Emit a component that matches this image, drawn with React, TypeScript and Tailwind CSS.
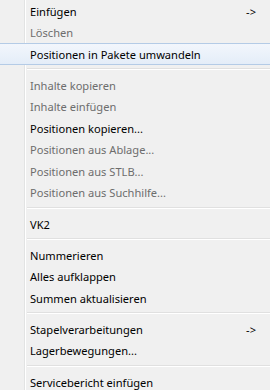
type Entry =
  | { kind: 'item'; label: string; disabled?: boolean; arrow?: boolean; active?: boolean }
  | { kind: 'sep' };

const entries: Entry[] = [
  { kind: 'item', label: 'Einfügen', arrow: true },
  { kind: 'item', label: 'Löschen', disabled: true },
  { kind: 'item', label: 'Positionen in Pakete umwandeln', active: true },
  { kind: 'sep' },
  { kind: 'item', label: 'Inhalte kopieren', disabled: true },
  { kind: 'item', label: 'Inhalte einfügen', disabled: true },
  { kind: 'item', label: 'Positionen kopieren...' },
  { kind: 'item', label: 'Positionen aus Ablage...', disabled: true },
  { kind: 'item', label: 'Positionen aus STLB...', disabled: true },
  { kind: 'item', label: 'Positionen aus Suchhilfe...', disabled: true },
  { kind: 'sep' },
  { kind: 'item', label: 'VK2' },
  { kind: 'sep' },
  { kind: 'item', label: 'Nummerieren' },
  { kind: 'item', label: 'Alles aufklappen' },
  { kind: 'item', label: 'Summen aktualisieren' },
  { kind: 'sep' },
  { kind: 'item', label: 'Stapelverarbeitungen', arrow: true },
  { kind: 'item', label: 'Lagerbewegungen...' },
  { kind: 'sep' },
  { kind: 'item', label: 'Servicebericht einfügen' },
];

function MenuRow({ entry }: { entry: Entry }) {
  if (entry.kind === 'sep') {
    return (
      <div className="flex h-[9.7px]">
        <div className="w-[24px] shrink-0" />
        <div className="flex-1 border-l border-[#e2e3e3] shadow-[inset_1px_0_0_#ffffff] flex items-center pl-[2px]">
          <div className="w-full border-t border-[#e0e0e0] border-b border-b-white" />
        </div>
      </div>
    );
  }

  const text = entry.disabled ? 'text-[#6d6d6d]' : 'text-[#000000]';

  if (entry.active) {
    return (
      <div className="h-[21.5px] mx-[-3px] flex items-center rounded-[3px] border border-[#b4cbe6] bg-gradient-to-b from-[#f2f6fc] to-[#e4edf8]">
        <span className={`pl-[32px] pt-[1px] ${text}`}>{entry.label}</span>
      </div>
    );
  }

  return (
    <div className="flex h-[21.5px]">
      <div className="w-[24px] shrink-0" />
      <div className="flex-1 border-l border-[#e2e3e3] shadow-[inset_1px_0_0_#ffffff] flex items-center justify-between pl-[5px] pr-[14px] pt-[1px]">
        <span className={text}>{entry.label}</span>
        {entry.arrow && <span className="text-[#000000]">-&gt;</span>}
      </div>
    </div>
  );
}

export default function App() {
  return (
    <div
      className="w-[270px] h-[390px] overflow-hidden bg-[#f0f0f0] text-[11.1px] leading-none"
      style={{ fontFamily: '"Segoe UI", "Noto Sans", "Open Sans", sans-serif' }}
    >
      {entries.map((entry, i) => (
        <MenuRow key={i} entry={entry} />
      ))}
    </div>
  );
}
